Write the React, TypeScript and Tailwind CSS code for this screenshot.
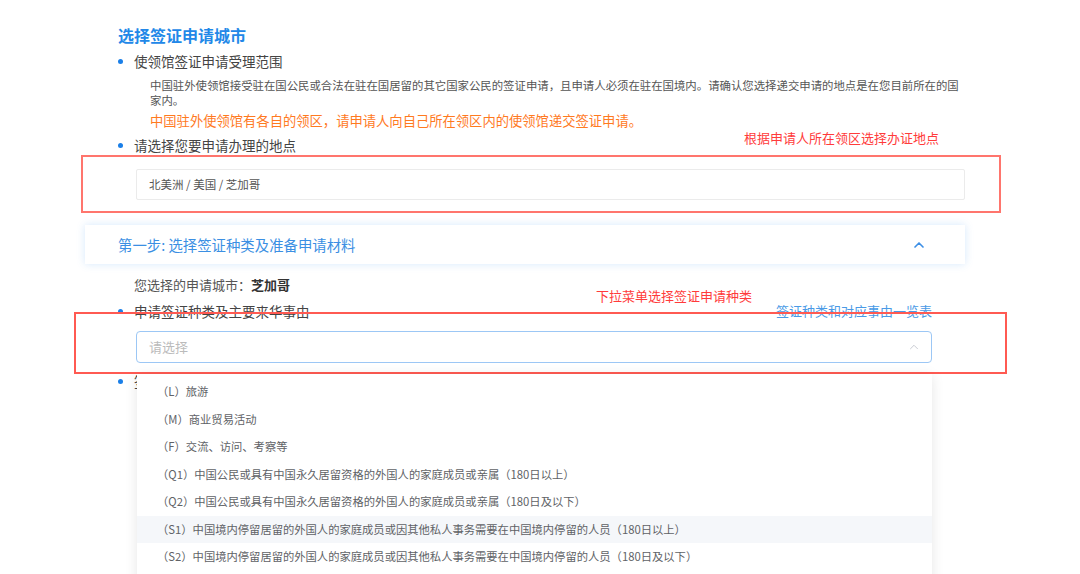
import { ChevronUp } from "lucide-react"

const font = "font-['Noto_Sans_CJK_SC','Noto_Sans',sans-serif]"

const visaTypes = [
    "（L）旅游",
    "（M）商业贸易活动",
    "（F）交流、访问、考察等",
    "（Q1）中国公民或具有中国永久居留资格的外国人的家庭成员或亲属（180日以上）",
    "（Q2）中国公民或具有中国永久居留资格的外国人的家庭成员或亲属（180日及以下）",
    "（S1）中国境内停留居留的外国人的家庭成员或因其他私人事务需要在中国境内停留的人员（180日以上）",
    "（S2）中国境内停留居留的外国人的家庭成员或因其他私人事务需要在中国境内停留的人员（180日及以下）",
]

function Bullet({ children, className = "" }: { children: React.ReactNode; className?: string }) {
    return (
        <div className={`flex items-center h-[20px] ml-[118px] ${className}`}>
            <span className="w-[5px] h-[5px] rounded-full bg-[#1a7fe8] shrink-0" />
            <span className="ml-[11px] text-[13.5px] text-[#444] leading-[20px] whitespace-nowrap">{children}</span>
        </div>
    )
}

export default function App() {
    return (
        <div className={`relative w-[1080px] h-[574px] overflow-hidden bg-white ${font}`}>
            <div className="flex flex-col pt-[23px]">
                <h2 className="ml-[118px] h-[24px] leading-[24px] text-[16px] font-bold text-[#2288e8]">选择签证申请城市</h2>

                <Bullet className="mt-[4px]">使领馆签证申请受理范围</Bullet>
                <p className="ml-[150px] mt-[7px] text-[11.4px] leading-[15px] text-[#555] whitespace-nowrap">
                    中国驻外使领馆接受驻在国公民或合法在驻在国居留的其它国家公民的签证申请，且申请人必须在驻在国境内。请确认您选择递交申请的地点是在您目前所在的国
                    <br />
                    家内。
                </p>
                <p className="ml-[150px] mt-[3px] h-[20px] leading-[20px] text-[13.3px] text-[#ff7a1f] whitespace-nowrap">
                    中国驻外使领馆有各自的领区，请申请人向自己所在领区内的使领馆递交签证申请。
                </p>

                <Bullet className="mt-[4px] h-[18px]">请选择您要申请办理的地点</Bullet>

                {/* red annotation box round the city picker */}
                <div className="ml-[81px] w-[920px] h-[58px] border-2 border-[#ff756d] pt-[12px]">
                    <div className="ml-[53px] w-[829px] h-[31px] border border-[#ebebeb] rounded-[2px] flex items-center px-[12px] text-[11.5px] text-[#555]">
                        北美洲 / 美国 / 芝加哥
                    </div>
                </div>

                <div className="ml-[85px] mt-[12px] w-[880px] h-[39px] bg-white shadow-[0_0_8px_rgba(64,150,240,0.22)] flex items-center justify-between pl-[33px] pr-[38px]">
                    <span className="text-[14.4px] text-[#3b8fe3]">第一步: 选择签证种类及准备申请材料</span>
                    <ChevronUp className="w-[16px] h-[16px] text-[#3d8fe6]" strokeWidth={2.5} />
                </div>

                <p className="ml-[134px] mt-[11px] h-[20px] leading-[20px] text-[13px] text-[#555]">
                    您选择的申请城市：<span className="font-bold text-[#333]">芝加哥</span>
                </p>

                <div className="mt-[6px] w-[932px] flex items-center justify-between">
                    <Bullet>申请签证种类及主要来华事由</Bullet>
                    <a className="text-[13px] leading-[20px] text-[#4a9ae6] whitespace-nowrap">签证种类和对应事由一览表</a>
                </div>

                <div className="ml-[136px] mt-[10px] w-[796px] h-[32px] border border-[#9cc7f5] rounded-[4px] flex items-center justify-between pl-[12px] pr-[10px]">
                    <span className="text-[13px] text-[#bbb]">请选择</span>
                    <ChevronUp className="w-[14px] h-[14px] text-[#c0c4cc]" strokeWidth={1.5} />
                </div>

                <Bullet className="mt-[8px]">签证申请表</Bullet>
            </div>

            {/* overlays: annotations and open dropdown */}
            <span className="absolute left-[744px] top-[128px] leading-[20px] text-[13px] text-[#ff3b3b] whitespace-nowrap">根据申请人所在领区选择办证地点</span>
            <span className="absolute left-[596px] top-[286px] leading-[20px] text-[13px] text-[#ff3b3b] whitespace-nowrap">下拉菜单选择签证申请种类</span>
            <div className="absolute left-[74px] top-[312px] w-[933px] h-[62px] border-2 border-[#ff5a52]" />

            <ul className="absolute left-[137px] top-[374px] w-[795px] h-[220px] bg-white shadow-[0_2px_12px_rgba(0,0,0,0.1)] pt-[4px]">
                {visaTypes.map((t, i) => (
                    <li
                        key={t}
                        className={`h-[27.5px] flex items-center pl-[20px] text-[11.3px] text-[#606266] whitespace-nowrap ${i === 5 ? "bg-[#f5f7fa]" : ""}`}
                    >
                        {t}
                    </li>
                ))}
            </ul>
        </div>
    )
}
